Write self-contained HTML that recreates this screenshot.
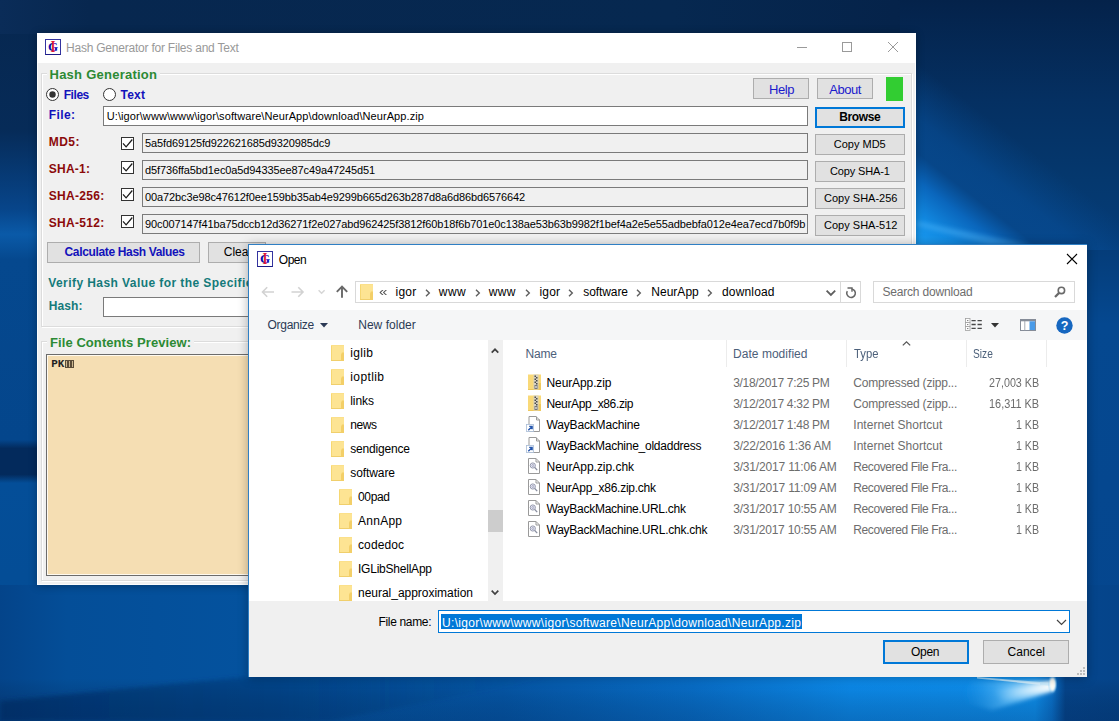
<!DOCTYPE html>
<html lang="en">
<head>
<meta charset="utf-8">
<title>Hash Generator for Files and Text</title>
<style>
html,body{margin:0;padding:0;}
body{width:1119px;height:721px;overflow:hidden;background:#04519b;font-family:"Liberation Sans",sans-serif;}
#root{position:relative;width:1119px;height:721px;overflow:hidden;}
#root div,#root span,#root svg{position:absolute;box-sizing:border-box;}
.t{white-space:pre;line-height:20px;}
.m{white-space:pre;line-height:20px;font-family:"Liberation Mono",monospace;}
.btn{background:#e1e1e1;border:1px solid #adadad;}
.tb{background:#f0f0f0;border:1px solid #7a7a7a;}
</style>
</head>
<body>
<div id="root">
<svg width="1119" height="721" viewBox="0 0 1119 721" style="left:0;top:0">
<defs>
<linearGradient id="gBase" x1="0" y1="0" x2="0" y2="721" gradientUnits="userSpaceOnUse">
<stop offset="0" stop-color="#07274f"/><stop offset="0.18" stop-color="#062b58"/><stop offset="0.29" stop-color="#07458a"/><stop offset="0.325" stop-color="#0a5aa8"/><stop offset="0.36" stop-color="#05488e"/><stop offset="0.61" stop-color="#04468c"/><stop offset="0.622" stop-color="#032a5c"/><stop offset="0.658" stop-color="#032a5c"/><stop offset="0.67" stop-color="#044e98"/><stop offset="0.93" stop-color="#044c94"/><stop offset="1" stop-color="#04468c"/>
</linearGradient>
<linearGradient id="gTop" x1="0" y1="0" x2="1119" y2="0" gradientUnits="userSpaceOnUse">
<stop offset="0" stop-color="#0a2c58"/><stop offset="0.08" stop-color="#07274f"/><stop offset="0.6" stop-color="#062850"/><stop offset="1" stop-color="#041e44"/>
</linearGradient>
<linearGradient id="gRight" x1="0" y1="0" x2="0" y2="721" gradientUnits="userSpaceOnUse">
<stop offset="0" stop-color="#04224a"/><stop offset="0.14" stop-color="#053062"/><stop offset="0.25" stop-color="#05386e"/><stop offset="0.34" stop-color="#053c78"/><stop offset="0.45" stop-color="#054890"/><stop offset="0.9" stop-color="#05468e"/><stop offset="1" stop-color="#043c80"/>
</linearGradient>
<linearGradient id="gBot" x1="0" y1="0" x2="1119" y2="0" gradientUnits="userSpaceOnUse">
<stop offset="0" stop-color="#04448a"/><stop offset="0.06" stop-color="#044e98"/><stop offset="0.22" stop-color="#04529e"/><stop offset="0.45" stop-color="#0558aa"/><stop offset="0.62" stop-color="#0870cc"/><stop offset="0.76" stop-color="#0c8cee"/><stop offset="0.925" stop-color="#0e92f2"/><stop offset="0.94" stop-color="#0a74d0"/><stop offset="0.952" stop-color="#05468e"/><stop offset="1" stop-color="#05448a"/>
</linearGradient>
<linearGradient id="gBotV" x1="0" y1="650" x2="0" y2="721" gradientUnits="userSpaceOnUse">
<stop offset="0" stop-color="#000" stop-opacity="0"/><stop offset="0.4" stop-color="#000" stop-opacity="0"/><stop offset="1" stop-color="#021a40" stop-opacity="0.25"/>
</linearGradient>
<linearGradient id="gConeR" x1="1030" y1="150" x2="941" y2="265" gradientUnits="userSpaceOnUse">
<stop offset="0" stop-color="#064a90" stop-opacity="0"/><stop offset="0.3" stop-color="#074e98" stop-opacity="0.6"/><stop offset="0.49" stop-color="#07488c" stop-opacity="0.9"/><stop offset="0.64" stop-color="#0a66bc" stop-opacity="1"/><stop offset="0.83" stop-color="#128ae2" stop-opacity="1"/><stop offset="1" stop-color="#1c9ef4" stop-opacity="1"/>
</linearGradient>
<radialGradient id="gGlow" cx="960" cy="705" r="420" gradientUnits="userSpaceOnUse" gradientTransform="translate(960 705) scale(1 0.5) translate(-960 -705)">
<stop offset="0" stop-color="#0c92f0" stop-opacity="1"/><stop offset="0.3" stop-color="#0a80de" stop-opacity="0.9"/><stop offset="0.7" stop-color="#0766c0" stop-opacity="0.5"/><stop offset="1" stop-color="#0556a8" stop-opacity="0"/>
</radialGradient>
<radialGradient id="gSpot2" cx="0.5" cy="0.5" r="0.5">
<stop offset="0" stop-color="#ffffff" stop-opacity="1"/><stop offset="0.45" stop-color="#d8f2ff" stop-opacity="0.85"/><stop offset="1" stop-color="#5cc0ff" stop-opacity="0"/>
</radialGradient>
<linearGradient id="gCone" x1="1050" y1="686" x2="965" y2="705" gradientUnits="userSpaceOnUse">
<stop offset="0" stop-color="#e8f8ff" stop-opacity="0.95"/><stop offset="0.5" stop-color="#7fd0ff" stop-opacity="0.6"/><stop offset="1" stop-color="#2aa0f0" stop-opacity="0"/>
</linearGradient>
<linearGradient id="gFloor" x1="0" y1="0" x2="560" y2="0" gradientUnits="userSpaceOnUse">
<stop offset="0" stop-color="#03306a" stop-opacity="0.7"/><stop offset="0.5" stop-color="#033a7c" stop-opacity="0.55"/><stop offset="1" stop-color="#044a92" stop-opacity="0"/>
</linearGradient>
<filter id="bl1" x="-50%" y="-50%" width="200%" height="200%"><feGaussianBlur stdDeviation="0.9"/></filter>
<linearGradient id="gCore" x1="1052" y1="686" x2="995" y2="697" gradientUnits="userSpaceOnUse"><stop offset="0" stop-color="#ffffff" stop-opacity="0.95"/><stop offset="0.6" stop-color="#e0f5ff" stop-opacity="0.45"/><stop offset="1" stop-color="#bfe8ff" stop-opacity="0"/></linearGradient>
<filter id="bl" x="-20%" y="-20%" width="140%" height="140%"><feGaussianBlur stdDeviation="2"/></filter>
</defs>
<rect width="1119" height="721" fill="url(#gBase)"/>
<rect x="0" y="0" width="1119" height="34" fill="url(#gTop)"/>
<rect x="900" y="0" width="219" height="585" fill="url(#gRight)"/>
<rect x="0" y="585" width="1119" height="136" fill="url(#gBot)"/>
<rect x="900" y="0" width="219" height="250" fill="url(#gConeR)"/>
<polygon points="917,221 1030,245 990,245 917,226" fill="#5cc0ff" opacity="0.35" filter="url(#bl)"/>
<polygon points="0,701 255,676 560,676 330,721 0,721" fill="url(#gFloor)" filter="url(#bl)"/>
<rect x="0" y="640" width="1119" height="81" fill="url(#gBotV)"/>
<polygon points="1053,681 1053,691 992,710 958,701 972,681" fill="url(#gCone)" filter="url(#bl)"/>
<polygon points="1052,683 1052,689 1002,701 992,690" fill="url(#gCore)" filter="url(#bl)"/>
<polygon points="1052,683 1052,686 977,678.500 977,677" fill="#c8ecff" opacity="0.75"/>
<polygon points="1040,683 1040,685 1000,680 1000,679.500" fill="#e8f8ff" opacity="0.5"/>
<ellipse cx="1052.500" cy="684" rx="5" ry="10" fill="url(#gSpot2)"/>
<ellipse cx="1052.500" cy="684.500" rx="2.400" ry="6.500" fill="#fffdf4" filter="url(#bl1)"/>
</svg>
<div style="left:37px;top:33px;width:879px;height:552px;background:#f0f0f0;box-shadow:0 1px 8px rgba(0,0,0,0.3);"></div>
<div style="left:37px;top:33px;width:879px;height:30px;background:#ffffff;"></div>
<div style="left:37px;top:63px;width:1px;height:522px;background:#fbfcfd;"></div>
<div style="left:915px;top:63px;width:1px;height:522px;background:#fbfcfd;"></div>
<div style="left:37px;top:584px;width:879px;height:1px;background:#fbfcfd;"></div>
<svg width="16" height="16" viewBox="0 0 16 16" style="left:45px;top:39px"><rect x="0.5" y="0.5" width="15" height="15" fill="#fff" stroke="#3434a0"/><path d="M0.500 15.500h15" stroke="#1c1c86"/><text x="8" y="12.200" text-anchor="middle" font-family="Liberation Serif,serif" font-weight="bold" font-size="13" fill="#0a0ab4">G</text><text x="8" y="13.400" text-anchor="middle" font-family="Liberation Serif,serif" font-weight="bold" font-size="17" fill="#e01838" textLength="5" lengthAdjust="spacingAndGlyphs">I</text></svg>
<span class="t" style="left:66.00px;top:38.00px;font-size:12px;color:#999999;letter-spacing:-0.221px;">Hash Generator for Files and Text</span>
<svg width="140" height="30" viewBox="0 0 140 30" style="left:777px;top:33px"><g stroke="#9a9a9a" stroke-width="1" fill="none"><path d="M20 14.5h10"/><rect x="65.5" y="9.5" width="9" height="9"/><path d="M111 9l10 10M121 9l-10 10"/></g></svg>
<div style="left:41px;top:73px;width:871px;height:254px;border:1px solid #dcdcdc;box-shadow:1px 1px 0 #fff, inset 1px 1px 0 #fff;"></div>
<div style="left:47px;top:66px;width:113px;height:16px;background:#f0f0f0;"></div>
<span class="t" style="left:49.50px;top:64.50px;font-size:13px;color:#2c8a34;font-weight:bold;letter-spacing:0.248px;">Hash Generation</span>
<svg width="13" height="13" viewBox="0 0 13 13" style="left:46px;top:88px"><circle cx="6.5" cy="6.5" r="6" fill="#fff" stroke="#333"/><circle cx="6.5" cy="6.5" r="3.2" fill="#333"/></svg>
<svg width="13" height="13" viewBox="0 0 13 13" style="left:103px;top:88px"><circle cx="6.5" cy="6.5" r="6" fill="#fff" stroke="#333"/></svg>
<span class="t" style="left:63.75px;top:84.75px;font-size:12px;color:#1212bb;font-weight:bold;letter-spacing:-0.457px;">Files</span>
<span class="t" style="left:120.50px;top:84.75px;font-size:12px;color:#1212bb;font-weight:bold;letter-spacing:0.240px;">Text</span>
<span class="t" style="left:48.75px;top:104.75px;font-size:12px;color:#1212bb;font-weight:bold;letter-spacing:0.398px;">File:</span>
<div style="left:103px;top:106px;width:705px;height:20px;background:#fff;border:1px solid #7a7a7a;"></div>
<span class="t" style="left:106.75px;top:106.00px;font-size:11px;color:#000;letter-spacing:0.083px;">U:\igor\www\www\igor\software\NeurApp\download\NeurApp.zip</span>
<span class="t" style="left:48.75px;top:131.75px;font-size:12px;color:#8b0a0a;font-weight:bold;letter-spacing:0.469px;">MD5:</span>
<svg width="13" height="13" viewBox="0 0 13 13" style="left:121px;top:137px;overflow:visible"><rect x="0.5" y="0.5" width="12" height="12" fill="#fff" stroke="#333"/><path d="M2 6.300L5.100 9.800L11.300 2.500" fill="none" stroke="#1a1a1a" stroke-width="1.25"/></svg>
<div class="tb" style="left:142px;top:133px;width:666px;height:20px;"></div>
<span class="t" style="left:145.00px;top:132.50px;font-size:11px;color:#000;letter-spacing:-0.121px;">5a5fd69125fd922621685d9320985dc9</span>
<div class="btn" style="left:815px;top:134px;width:90px;height:21px;"></div>
<span class="t" style="left:833.75px;top:133.50px;font-size:11px;color:#000;">Copy MD5</span>
<span class="t" style="left:48.75px;top:158.75px;font-size:12px;color:#8b0a0a;font-weight:bold;letter-spacing:0.247px;">SHA-1:</span>
<svg width="13" height="13" viewBox="0 0 13 13" style="left:121px;top:161px;overflow:visible"><rect x="0.5" y="0.5" width="12" height="12" fill="#fff" stroke="#333"/><path d="M2 6.300L5.100 9.800L11.300 2.500" fill="none" stroke="#1a1a1a" stroke-width="1.25"/></svg>
<div class="tb" style="left:142px;top:160px;width:666px;height:20px;"></div>
<span class="t" style="left:145.00px;top:159.50px;font-size:11px;color:#000;letter-spacing:-0.099px;">d5f736ffa5bd1ec0a5d94335ee87c49a47245d51</span>
<div class="btn" style="left:815px;top:161px;width:90px;height:21px;"></div>
<span class="t" style="left:830.00px;top:160.50px;font-size:11px;color:#000;letter-spacing:-0.128px;">Copy SHA-1</span>
<span class="t" style="left:48.75px;top:185.75px;font-size:12px;color:#8b0a0a;font-weight:bold;letter-spacing:0.306px;">SHA-256:</span>
<svg width="13" height="13" viewBox="0 0 13 13" style="left:121px;top:188px;overflow:visible"><rect x="0.5" y="0.5" width="12" height="12" fill="#fff" stroke="#333"/><path d="M2 6.300L5.100 9.800L11.300 2.500" fill="none" stroke="#1a1a1a" stroke-width="1.25"/></svg>
<div class="tb" style="left:142px;top:187px;width:666px;height:20px;"></div>
<span class="t" style="left:145.00px;top:186.50px;font-size:11px;color:#000;letter-spacing:-0.114px;">00a72bc3e98c47612f0ee159bb35ab4e9299b665d263b287d8a6d86bd6576642</span>
<div class="btn" style="left:815px;top:188px;width:90px;height:21px;"></div>
<span class="t" style="left:824.00px;top:187.50px;font-size:11px;color:#000;letter-spacing:0.009px;">Copy SHA-256</span>
<span class="t" style="left:48.75px;top:212.75px;font-size:12px;color:#8b0a0a;font-weight:bold;letter-spacing:0.306px;">SHA-512:</span>
<svg width="13" height="13" viewBox="0 0 13 13" style="left:121px;top:215px;overflow:visible"><rect x="0.5" y="0.5" width="12" height="12" fill="#fff" stroke="#333"/><path d="M2 6.300L5.100 9.800L11.300 2.500" fill="none" stroke="#1a1a1a" stroke-width="1.25"/></svg>
<div class="tb" style="left:142px;top:214px;width:666px;height:20px;"></div>
<div style="left:143px;top:215px;width:663px;height:18px;overflow:hidden;"><span class="t" style="left:2px;top:-1.00px;font-size:11px;letter-spacing:-0.11px;color:#000">90c007147f41ba75dccb12d36271f2e027abd962425f3812f60b18f6b701e0c138ae53b63b9982f1bef4a2e5e55adbebfa012e4ea7ecd7b0f9b</span></div>
<div class="btn" style="left:815px;top:215px;width:90px;height:21px;"></div>
<span class="t" style="left:824.00px;top:214.50px;font-size:11px;color:#000;letter-spacing:0.009px;">Copy SHA-512</span>
<div class="btn" style="left:753px;top:78px;width:56px;height:21px;"></div>
<span class="t" style="left:769.00px;top:79.70px;font-size:13px;color:#1a1acc;letter-spacing:-0.417px;">Help</span>
<div class="btn" style="left:817px;top:78px;width:56px;height:21px;"></div>
<span class="t" style="left:829.25px;top:79.70px;font-size:13px;color:#1a1acc;letter-spacing:-0.434px;">About</span>
<div style="left:886px;top:77px;width:17px;height:24px;background:#32cd32;"></div>
<div style="left:815px;top:107px;width:90px;height:21px;background:#e1e1e1;border:2px solid #0078d7;"></div>
<span class="t" style="left:839.25px;top:106.50px;font-size:12px;color:#000;font-weight:bold;letter-spacing:-0.369px;">Browse</span>
<div class="btn" style="left:47px;top:242px;width:153px;height:21px;"></div>
<span class="t" style="left:64.50px;top:242.00px;font-size:12px;color:#1212bb;font-weight:bold;letter-spacing:-0.343px;">Calculate Hash Values</span>
<div class="btn" style="left:208px;top:242px;width:58px;height:21px;"></div>
<span class="t" style="left:223.75px;top:242.00px;font-size:12px;color:#000;">Clear</span>
<span class="t" style="left:48.25px;top:273.00px;font-size:12px;color:#147a7a;font-weight:bold;letter-spacing:0.425px;">Verify Hash Value for the Specified File:</span>
<span class="t" style="left:48.75px;top:295.50px;font-size:12px;color:#147a7a;font-weight:bold;letter-spacing:0.102px;">Hash:</span>
<div style="left:103px;top:297px;width:600px;height:20px;background:#fff;border:1px solid #7a7a7a;"></div>
<div style="left:41px;top:341px;width:871px;height:240px;border:1px solid #dcdcdc;box-shadow:1px 1px 0 #fff, inset 1px 1px 0 #fff;"></div>
<div style="left:47px;top:334px;width:147px;height:16px;background:#f0f0f0;"></div>
<span class="t" style="left:50.00px;top:333.10px;font-size:13px;color:#2c8a34;font-weight:bold;letter-spacing:0.075px;">File Contents Preview:</span>
<div style="left:46px;top:354px;width:862px;height:222px;background:#f5deb3;border:1px solid #6c6c6c;box-shadow:inset 0 0 0 1px #fffaf0;"></div>
<span class="m" style="left:51.20px;top:353.70px;font-size:11px;color:#222;font-weight:bold;">PK</span>
<div style="left:64.5px;top:360px;width:3.5px;height:8px;border:1px solid #5a4c38;background:#cdb890;"></div>
<div style="left:67.5px;top:360px;width:3.5px;height:8px;border:1px solid #5a4c38;background:#cdb890;"></div>
<div style="left:70.5px;top:360px;width:3.5px;height:8px;border:1px solid #5a4c38;background:#cdb890;"></div>
<div style="left:248px;top:244px;width:839px;height:433px;background:#fff;border-top:1px solid #2f7fc4;border-left:1px solid #2f7fc4;box-shadow:0 1px 10px rgba(0,0,0,0.3);"></div>
<svg width="16" height="16" viewBox="0 0 16 16" style="left:257px;top:251px"><rect x="0.5" y="0.5" width="15" height="15" fill="#fff" stroke="#3434a0"/><path d="M0.500 15.500h15" stroke="#1c1c86"/><text x="8" y="12.200" text-anchor="middle" font-family="Liberation Serif,serif" font-weight="bold" font-size="13" fill="#0a0ab4">G</text><text x="8" y="13.400" text-anchor="middle" font-family="Liberation Serif,serif" font-weight="bold" font-size="17" fill="#e01838" textLength="5" lengthAdjust="spacingAndGlyphs">I</text></svg>
<span class="t" style="left:278.75px;top:249.75px;font-size:12px;color:#000;letter-spacing:-0.448px;">Open</span>
<svg width="14" height="14" viewBox="0 0 14 14" style="left:1065px;top:252px"><path d="M2 2l10 10M12 2l-10 10" stroke="#000" stroke-width="1.1" fill="none"/></svg>
<svg width="100" height="22" viewBox="0 0 100 22" style="left:256px;top:281px"><g fill="none"><path d="M18 11H6.800M11.200 6.300L6.500 11l4.700 4.700" stroke="#d2d2d2" stroke-width="1.600"/><path d="M35.500 11H46.700M42.300 6.300L47 11l-4.700 4.700" stroke="#d2d2d2" stroke-width="1.600"/><path d="M62.600 9.300l3 3l3-3" stroke="#d6d6d6" stroke-width="1.500"/><path d="M86 16.800V6.500M80.800 10.900L86 5.700l5.200 5.200" stroke="#686868" stroke-width="1.900"/></g></svg>
<div style="left:355px;top:281px;width:506px;height:22px;background:#fff;border:1px solid #d9d9d9;"></div>
<svg width="13" height="16" viewBox="0 0 13 16" style="left:360px;top:283.5px"><rect x="0" y="0" width="13" height="16" fill="#fde493"/><rect x="0" y="0" width="1" height="16" fill="#f6d772"/><rect x="0" y="15" width="13" height="1" fill="#f0cf6c"/><path d="M10 16V9.500L11 7.500h2V16z" fill="#f3cf68"/><rect x="0" y="0" width="13" height="1" fill="#fbe08a"/></svg>
<span class="t" style="left:378.80px;top:282.00px;font-size:13px;color:#555;transform:scaleX(1.1611);transform-origin:0 0;">«</span>
<span class="t" style="left:395.50px;top:282.25px;font-size:12px;color:#000;letter-spacing:0.245px;">igor</span>
<svg width="6" height="8" viewBox="0 0 6 8" style="left:424.5px;top:288.5px"><path d="M1 0.800L4.300 4L1 7.200" fill="none" stroke="#5e5e5e" stroke-width="1.4"/></svg>
<span class="t" style="left:438.75px;top:282.25px;font-size:12px;color:#000;letter-spacing:0.492px;">www</span>
<svg width="6" height="8" viewBox="0 0 6 8" style="left:474.5px;top:288.5px"><path d="M1 0.800L4.300 4L1 7.200" fill="none" stroke="#5e5e5e" stroke-width="1.4"/></svg>
<span class="t" style="left:488.75px;top:282.25px;font-size:12px;color:#000;letter-spacing:0.367px;">www</span>
<svg width="6" height="8" viewBox="0 0 6 8" style="left:524.5px;top:288.5px"><path d="M1 0.800L4.300 4L1 7.200" fill="none" stroke="#5e5e5e" stroke-width="1.4"/></svg>
<span class="t" style="left:539.50px;top:282.25px;font-size:12px;color:#000;letter-spacing:0.161px;">igor</span>
<svg width="6" height="8" viewBox="0 0 6 8" style="left:568.25px;top:288.5px"><path d="M1 0.800L4.300 4L1 7.200" fill="none" stroke="#5e5e5e" stroke-width="1.4"/></svg>
<span class="t" style="left:583.25px;top:282.25px;font-size:12px;color:#000;letter-spacing:-0.085px;">software</span>
<svg width="6" height="8" viewBox="0 0 6 8" style="left:636.25px;top:288.5px"><path d="M1 0.800L4.300 4L1 7.200" fill="none" stroke="#5e5e5e" stroke-width="1.4"/></svg>
<span class="t" style="left:651.25px;top:282.25px;font-size:12px;color:#000;letter-spacing:0.023px;">NeurApp</span>
<svg width="6" height="8" viewBox="0 0 6 8" style="left:707.0px;top:288.5px"><path d="M1 0.800L4.300 4L1 7.200" fill="none" stroke="#5e5e5e" stroke-width="1.4"/></svg>
<span class="t" style="left:722.00px;top:282.25px;font-size:12px;color:#000;letter-spacing:0.161px;">download</span>
<svg width="12" height="8" viewBox="0 0 12 8" style="left:825px;top:289px"><path d="M1.600 1.600L5.900 6l4.300-4.400" fill="none" stroke="#5e5e5e" stroke-width="1.800"/></svg>
<div style="left:840px;top:282px;width:1px;height:20px;background:#d9d9d9;"></div>
<svg width="14" height="14" viewBox="0 0 14 14" style="left:844px;top:285px"><path d="M7.600 3.900A4.300 4.300 0 1 1 3.300 6.050" fill="none" stroke="#666" stroke-width="1.500"/><path d="M3.500 3H8V6.800" fill="none" stroke="#666" stroke-width="1.400"/></svg>
<div style="left:873px;top:281px;width:202px;height:22px;background:#fff;border:1px solid #d9d9d9;"></div>
<span class="t" style="left:882.40px;top:282.25px;font-size:12px;color:#6d6d6d;letter-spacing:-0.173px;">Search download</span>
<svg width="14" height="14" viewBox="0 0 14 14" style="left:1053px;top:285px"><circle cx="8.400" cy="5.400" r="3.200" fill="none" stroke="#6a6a6a" stroke-width="1.600"/><path d="M6.100 7.900L2 12" stroke="#6a6a6a" stroke-width="2.200"/></svg>
<div style="left:249px;top:310px;width:838px;height:30px;background:#f5f6f7;"></div>
<span class="t" style="left:267.50px;top:314.75px;font-size:12px;color:#2b3a55;letter-spacing:-0.277px;">Organize</span>
<svg width="8" height="5" viewBox="0 0 8 5" style="left:319.5px;top:323px"><path d="M0 0h8L4 4.500z" fill="#2b3a55"/></svg>
<span class="t" style="left:358.25px;top:314.75px;font-size:12px;color:#2b3a55;letter-spacing:0.016px;">New folder</span>
<svg width="18" height="14" viewBox="0 0 18 14" style="left:964.500px;top:318px"><g fill="#fff" stroke="#a0a0a0" stroke-width="0.800"><rect x="0.500" y="0.500" width="4.500" height="4"/><rect x="0.500" y="4.500" width="4.500" height="4"/><rect x="0.500" y="8.500" width="4.500" height="4"/></g><g fill="#666"><rect x="2.200" y="2" width="1.100" height="1.100"/><rect x="2.200" y="6" width="1.100" height="1.100"/><rect x="2.200" y="10" width="1.100" height="1.100"/></g><g stroke="#484848" stroke-width="1.300"><path d="M6.500 2.600h4.200M12.500 2.600h4.300M6.500 6.500h4.200M12.500 6.500h4.300M6.500 10.400h4.200M12.500 10.400h4.300"/></g></svg>
<svg width="8" height="5" viewBox="0 0 8 5" style="left:990.500px;top:322.500px"><path d="M0 0h8L4 4.500z" fill="#333"/></svg>
<svg width="16" height="12" viewBox="0 0 16 12" style="left:1020px;top:319px"><rect x="0.500" y="0.500" width="15" height="11" fill="#fff" stroke="#858c98"/><rect x="1" y="1" width="14" height="1.300" fill="#858c98"/><rect x="9.500" y="2.300" width="5.500" height="8.700" fill="#4a9be8"/><path d="M4.800 2v9.500" stroke="#9aa0aa" stroke-width="0.900"/></svg>
<svg width="17" height="17" viewBox="0 0 17 17" style="left:1055.500px;top:316.500px"><circle cx="8.500" cy="8.500" r="8.200" fill="#1667c0"/><text x="8.500" y="13" text-anchor="middle" font-family="Liberation Sans,sans-serif" font-weight="bold" font-size="12.500" fill="#fff">?</text></svg>
<div style="left:249px;top:340px;width:255px;height:261px;overflow:hidden;background:#fff">
<svg width="13" height="16" viewBox="0 0 13 16" style="left:82px;top:5.0px"><rect x="0" y="0" width="13" height="16" fill="#fde493"/><rect x="0" y="0" width="1" height="16" fill="#f6d772"/><rect x="0" y="15" width="13" height="1" fill="#f0cf6c"/><path d="M10 16V9.500L11 7.500h2V16z" fill="#f3cf68"/><rect x="0" y="0" width="13" height="1" fill="#fbe08a"/></svg>
<span class="t" style="left:101.25px;top:3.25px;font-size:12px;letter-spacing:0.348px;color:#000">iglib</span>
<svg width="13" height="16" viewBox="0 0 13 16" style="left:82px;top:29.0px"><rect x="0" y="0" width="13" height="16" fill="#fde493"/><rect x="0" y="0" width="1" height="16" fill="#f6d772"/><rect x="0" y="15" width="13" height="1" fill="#f0cf6c"/><path d="M10 16V9.500L11 7.500h2V16z" fill="#f3cf68"/><rect x="0" y="0" width="13" height="1" fill="#fbe08a"/></svg>
<span class="t" style="left:101.25px;top:27.25px;font-size:12px;letter-spacing:0.398px;color:#000">ioptlib</span>
<svg width="13" height="16" viewBox="0 0 13 16" style="left:82px;top:53.0px"><rect x="0" y="0" width="13" height="16" fill="#fde493"/><rect x="0" y="0" width="1" height="16" fill="#f6d772"/><rect x="0" y="15" width="13" height="1" fill="#f0cf6c"/><path d="M10 16V9.500L11 7.500h2V16z" fill="#f3cf68"/><rect x="0" y="0" width="13" height="1" fill="#fbe08a"/></svg>
<span class="t" style="left:101.25px;top:51.25px;font-size:12px;letter-spacing:-0.066px;color:#000">links</span>
<svg width="13" height="16" viewBox="0 0 13 16" style="left:82px;top:77.0px"><rect x="0" y="0" width="13" height="16" fill="#fde493"/><rect x="0" y="0" width="1" height="16" fill="#f6d772"/><rect x="0" y="15" width="13" height="1" fill="#f0cf6c"/><path d="M10 16V9.500L11 7.500h2V16z" fill="#f3cf68"/><rect x="0" y="0" width="13" height="1" fill="#fbe08a"/></svg>
<span class="t" style="left:101.25px;top:75.25px;font-size:12px;letter-spacing:-0.422px;color:#000">news</span>
<svg width="13" height="16" viewBox="0 0 13 16" style="left:82px;top:101.0px"><rect x="0" y="0" width="13" height="16" fill="#fde493"/><rect x="0" y="0" width="1" height="16" fill="#f6d772"/><rect x="0" y="15" width="13" height="1" fill="#f0cf6c"/><path d="M10 16V9.500L11 7.500h2V16z" fill="#f3cf68"/><rect x="0" y="0" width="13" height="1" fill="#fbe08a"/></svg>
<span class="t" style="left:101.25px;top:99.25px;font-size:12px;letter-spacing:-0.181px;color:#000">sendigence</span>
<svg width="13" height="16" viewBox="0 0 13 16" style="left:82px;top:125.0px"><rect x="0" y="0" width="13" height="16" fill="#fde493"/><rect x="0" y="0" width="1" height="16" fill="#f6d772"/><rect x="0" y="15" width="13" height="1" fill="#f0cf6c"/><path d="M10 16V9.500L11 7.500h2V16z" fill="#f3cf68"/><rect x="0" y="0" width="13" height="1" fill="#fbe08a"/></svg>
<span class="t" style="left:101.25px;top:123.25px;font-size:12px;letter-spacing:-0.085px;color:#000">software</span>
<svg width="13" height="16" viewBox="0 0 13 16" style="left:90px;top:149.0px"><rect x="0" y="0" width="13" height="16" fill="#fde493"/><rect x="0" y="0" width="1" height="16" fill="#f6d772"/><rect x="0" y="15" width="13" height="1" fill="#f0cf6c"/><path d="M10 16V9.500L11 7.500h2V16z" fill="#f3cf68"/><rect x="0" y="0" width="13" height="1" fill="#fbe08a"/></svg>
<span class="t" style="left:109.00px;top:147.25px;font-size:12px;letter-spacing:-0.340px;color:#000">00pad</span>
<svg width="13" height="16" viewBox="0 0 13 16" style="left:90px;top:173.0px"><rect x="0" y="0" width="13" height="16" fill="#fde493"/><rect x="0" y="0" width="1" height="16" fill="#f6d772"/><rect x="0" y="15" width="13" height="1" fill="#f0cf6c"/><path d="M10 16V9.500L11 7.500h2V16z" fill="#f3cf68"/><rect x="0" y="0" width="13" height="1" fill="#fbe08a"/></svg>
<span class="t" style="left:109.00px;top:171.25px;font-size:12px;letter-spacing:0.263px;color:#000">AnnApp</span>
<svg width="13" height="16" viewBox="0 0 13 16" style="left:90px;top:197.0px"><rect x="0" y="0" width="13" height="16" fill="#fde493"/><rect x="0" y="0" width="1" height="16" fill="#f6d772"/><rect x="0" y="15" width="13" height="1" fill="#f0cf6c"/><path d="M10 16V9.500L11 7.500h2V16z" fill="#f3cf68"/><rect x="0" y="0" width="13" height="1" fill="#fbe08a"/></svg>
<span class="t" style="left:109.00px;top:195.25px;font-size:12px;letter-spacing:0.107px;color:#000">codedoc</span>
<svg width="13" height="16" viewBox="0 0 13 16" style="left:90px;top:221.0px"><rect x="0" y="0" width="13" height="16" fill="#fde493"/><rect x="0" y="0" width="1" height="16" fill="#f6d772"/><rect x="0" y="15" width="13" height="1" fill="#f0cf6c"/><path d="M10 16V9.500L11 7.500h2V16z" fill="#f3cf68"/><rect x="0" y="0" width="13" height="1" fill="#fbe08a"/></svg>
<span class="t" style="left:109.00px;top:219.25px;font-size:12px;letter-spacing:-0.225px;color:#000">IGLibShellApp</span>
<svg width="13" height="16" viewBox="0 0 13 16" style="left:90px;top:245.0px"><rect x="0" y="0" width="13" height="16" fill="#fde493"/><rect x="0" y="0" width="1" height="16" fill="#f6d772"/><rect x="0" y="15" width="13" height="1" fill="#f0cf6c"/><path d="M10 16V9.500L11 7.500h2V16z" fill="#f3cf68"/><rect x="0" y="0" width="13" height="1" fill="#fbe08a"/></svg>
<span class="t" style="left:109.00px;top:243.25px;font-size:12px;letter-spacing:-0.021px;color:#000">neural_approximation</span>
</div>
<div style="left:488px;top:340px;width:15px;height:261px;background:#f0f0f0;"></div>
<div style="left:488px;top:510px;width:15px;height:22px;background:#cdcdcd;"></div>
<svg width="10" height="7" viewBox="0 0 10 7" style="left:490px;top:346.500px"><path d="M1.700 5.600L5 2.300l3.300 3.300" fill="none" stroke="#404040" stroke-width="1.700"/></svg>
<svg width="10" height="7" viewBox="0 0 10 7" style="left:490px;top:589px"><path d="M1.700 1.700L5 5l3.300-3.300" fill="none" stroke="#404040" stroke-width="1.700"/></svg>
<span class="t" style="left:525.50px;top:343.50px;font-size:12px;color:#4c607a;letter-spacing:-0.172px;">Name</span>
<span class="t" style="left:733.00px;top:343.50px;font-size:12px;color:#4c607a;letter-spacing:0.039px;">Date modified</span>
<span class="t" style="left:853.80px;top:343.50px;font-size:12px;color:#4c607a;transform:scaleX(0.9379);transform-origin:0 0;">Type</span>
<span class="t" style="left:973.20px;top:343.50px;font-size:12px;color:#4c607a;transform:scaleX(0.8482);transform-origin:0 0;">Size</span>
<div style="left:726px;top:340px;width:1px;height:27px;background:#ececec;"></div>
<div style="left:846px;top:340px;width:1px;height:27px;background:#ececec;"></div>
<div style="left:966px;top:340px;width:1px;height:27px;background:#ececec;"></div>
<div style="left:1046px;top:340px;width:1px;height:27px;background:#ececec;"></div>
<svg width="9" height="5" viewBox="0 0 9 5" style="left:902px;top:340.700px"><path d="M0.800 4.400L4.500 0.900L8.200 4.400" fill="none" stroke="#585858" stroke-width="1.300"/></svg>
<svg width="14" height="16" viewBox="0 0 14 16" style="left:527px;top:373.5px"><rect x="1" y="0.500" width="13" height="15.500" fill="#f9d978"/><rect x="1" y="15" width="13" height="1" fill="#eec85c"/><path d="M11 16V10.500L12 9h2V16z" fill="#efc95e"/><rect x="6.500" y="0.500" width="5" height="15" fill="#d8d2c0"/><g fill="#4a4a4a"><rect x="7.500" y="1.500" width="1.500" height="1.500"/><rect x="9" y="3" width="1.500" height="1.500"/><rect x="7.500" y="4.500" width="1.500" height="1.500"/><rect x="9" y="6" width="1.500" height="1.500"/><rect x="7.500" y="7.500" width="1.500" height="1.500"/><rect x="9" y="9" width="1.500" height="1.500"/></g><rect x="7.500" y="11" width="3" height="4" fill="#777"/><rect x="8.300" y="12" width="1.400" height="2" fill="#ddd"/></svg>
<span class="t" style="left:546.50px;top:373.00px;font-size:12px;color:#000;letter-spacing:-0.103px;">NeurApp.zip</span>
<span class="t" style="left:733.20px;top:373.00px;font-size:12px;color:#6d6d6d;letter-spacing:-0.304px;">3/18/2017 7:25 PM</span>
<span class="t" style="left:853.30px;top:373.00px;font-size:12px;color:#6d6d6d;letter-spacing:-0.187px;">Compressed (zipp...</span>
<span class="t" style="left:989.10px;top:373.00px;font-size:12px;color:#6d6d6d;transform:scaleX(0.8944);transform-origin:0 0;">27,003 KB</span>
<svg width="14" height="16" viewBox="0 0 14 16" style="left:527px;top:394.5px"><rect x="1" y="0.500" width="13" height="15.500" fill="#f9d978"/><rect x="1" y="15" width="13" height="1" fill="#eec85c"/><path d="M11 16V10.500L12 9h2V16z" fill="#efc95e"/><rect x="6.500" y="0.500" width="5" height="15" fill="#d8d2c0"/><g fill="#4a4a4a"><rect x="7.500" y="1.500" width="1.500" height="1.500"/><rect x="9" y="3" width="1.500" height="1.500"/><rect x="7.500" y="4.500" width="1.500" height="1.500"/><rect x="9" y="6" width="1.500" height="1.500"/><rect x="7.500" y="7.500" width="1.500" height="1.500"/><rect x="9" y="9" width="1.500" height="1.500"/></g><rect x="7.500" y="11" width="3" height="4" fill="#777"/><rect x="8.300" y="12" width="1.400" height="2" fill="#ddd"/></svg>
<span class="t" style="left:546.50px;top:394.00px;font-size:12px;color:#000;letter-spacing:-0.360px;">NeurApp_x86.zip</span>
<span class="t" style="left:733.20px;top:394.00px;font-size:12px;color:#6d6d6d;letter-spacing:-0.304px;">3/12/2017 4:32 PM</span>
<span class="t" style="left:853.30px;top:394.00px;font-size:12px;color:#6d6d6d;letter-spacing:-0.187px;">Compressed (zipp...</span>
<span class="t" style="left:989.10px;top:394.00px;font-size:12px;color:#6d6d6d;transform:scaleX(0.9088);transform-origin:0 0;">16,311 KB</span>
<svg width="14" height="16" viewBox="0 0 14 16" style="left:527px;top:415.5px;overflow:visible"><path d="M2 0.500h7l3.500 3.500v11.500h-10.500z" fill="#fff" stroke="#9a9a9a"/><path d="M9.500 0.500v3.500h3.500" fill="none" stroke="#9a9a9a"/><rect x="-0.500" y="8.500" width="7" height="7" fill="#fff" stroke="#a9bcd6" stroke-width="0.800"/><path d="M1.300 14.200L4.600 10.900M2.200 10.400h2.900v2.900" fill="none" stroke="#2455ad" stroke-width="1.400"/></svg>
<span class="t" style="left:546.50px;top:415.00px;font-size:12px;color:#000;letter-spacing:-0.161px;">WayBackMachine</span>
<span class="t" style="left:733.20px;top:415.00px;font-size:12px;color:#6d6d6d;letter-spacing:-0.304px;">3/12/2017 1:48 PM</span>
<span class="t" style="left:853.30px;top:415.00px;font-size:12px;color:#6d6d6d;letter-spacing:0.021px;">Internet Shortcut</span>
<span class="t" style="left:1016.20px;top:415.00px;font-size:12px;color:#6d6d6d;transform:scaleX(0.8846);transform-origin:0 0;">1 KB</span>
<svg width="14" height="16" viewBox="0 0 14 16" style="left:527px;top:436.5px;overflow:visible"><path d="M2 0.500h7l3.500 3.500v11.500h-10.500z" fill="#fff" stroke="#9a9a9a"/><path d="M9.500 0.500v3.500h3.500" fill="none" stroke="#9a9a9a"/><rect x="-0.500" y="8.500" width="7" height="7" fill="#fff" stroke="#a9bcd6" stroke-width="0.800"/><path d="M1.300 14.200L4.600 10.900M2.200 10.400h2.900v2.900" fill="none" stroke="#2455ad" stroke-width="1.400"/></svg>
<span class="t" style="left:546.50px;top:436.00px;font-size:12px;color:#000;letter-spacing:-0.249px;">WayBackMachine_oldaddress</span>
<span class="t" style="left:733.20px;top:436.00px;font-size:12px;color:#6d6d6d;letter-spacing:-0.169px;">3/22/2016 1:36 AM</span>
<span class="t" style="left:853.30px;top:436.00px;font-size:12px;color:#6d6d6d;letter-spacing:0.021px;">Internet Shortcut</span>
<span class="t" style="left:1016.20px;top:436.00px;font-size:12px;color:#6d6d6d;transform:scaleX(0.8846);transform-origin:0 0;">1 KB</span>
<svg width="14" height="16" viewBox="0 0 14 16" style="left:527px;top:457.5px"><path d="M1.500 0.500h7.500l3.500 3.500v11.500h-11z" fill="#fff" stroke="#9a9a9a"/><path d="M9 0.500v3.500h3.500" fill="none" stroke="#9a9a9a"/><circle cx="5.800" cy="7.500" r="2.600" fill="#eef" stroke="#8a8fa0" stroke-width="0.900"/><circle cx="5.800" cy="7.500" r="1" fill="none" stroke="#8a8fa0" stroke-width="0.700"/><path d="M7.800 9.500l2.400 2.600" stroke="#8a8fa0" stroke-width="1.300"/></svg>
<span class="t" style="left:546.50px;top:457.00px;font-size:12px;color:#000;letter-spacing:-0.038px;">NeurApp.zip.chk</span>
<span class="t" style="left:733.20px;top:457.00px;font-size:12px;color:#6d6d6d;letter-spacing:-0.176px;">3/31/2017 11:06 AM</span>
<span class="t" style="left:853.30px;top:457.00px;font-size:12px;color:#6d6d6d;letter-spacing:-0.401px;">Recovered File Fra...</span>
<span class="t" style="left:1016.20px;top:457.00px;font-size:12px;color:#6d6d6d;transform:scaleX(0.8846);transform-origin:0 0;">1 KB</span>
<svg width="14" height="16" viewBox="0 0 14 16" style="left:527px;top:478.5px"><path d="M1.500 0.500h7.500l3.500 3.500v11.500h-11z" fill="#fff" stroke="#9a9a9a"/><path d="M9 0.500v3.500h3.500" fill="none" stroke="#9a9a9a"/><circle cx="5.800" cy="7.500" r="2.600" fill="#eef" stroke="#8a8fa0" stroke-width="0.900"/><circle cx="5.800" cy="7.500" r="1" fill="none" stroke="#8a8fa0" stroke-width="0.700"/><path d="M7.800 9.500l2.400 2.600" stroke="#8a8fa0" stroke-width="1.300"/></svg>
<span class="t" style="left:546.50px;top:478.00px;font-size:12px;color:#000;letter-spacing:-0.253px;">NeurApp_x86.zip.chk</span>
<span class="t" style="left:733.20px;top:478.00px;font-size:12px;color:#6d6d6d;letter-spacing:-0.176px;">3/31/2017 11:09 AM</span>
<span class="t" style="left:853.30px;top:478.00px;font-size:12px;color:#6d6d6d;letter-spacing:-0.401px;">Recovered File Fra...</span>
<span class="t" style="left:1016.20px;top:478.00px;font-size:12px;color:#6d6d6d;transform:scaleX(0.8846);transform-origin:0 0;">1 KB</span>
<svg width="14" height="16" viewBox="0 0 14 16" style="left:527px;top:499.5px"><path d="M1.500 0.500h7.500l3.500 3.500v11.500h-11z" fill="#fff" stroke="#9a9a9a"/><path d="M9 0.500v3.500h3.500" fill="none" stroke="#9a9a9a"/><circle cx="5.800" cy="7.500" r="2.600" fill="#eef" stroke="#8a8fa0" stroke-width="0.900"/><circle cx="5.800" cy="7.500" r="1" fill="none" stroke="#8a8fa0" stroke-width="0.700"/><path d="M7.800 9.500l2.400 2.600" stroke="#8a8fa0" stroke-width="1.300"/></svg>
<span class="t" style="left:546.50px;top:499.00px;font-size:12px;color:#000;letter-spacing:-0.259px;">WayBackMachine.URL.chk</span>
<span class="t" style="left:733.20px;top:499.00px;font-size:12px;color:#6d6d6d;letter-spacing:-0.228px;">3/31/2017 10:55 AM</span>
<span class="t" style="left:853.30px;top:499.00px;font-size:12px;color:#6d6d6d;letter-spacing:-0.401px;">Recovered File Fra...</span>
<span class="t" style="left:1016.20px;top:499.00px;font-size:12px;color:#6d6d6d;transform:scaleX(0.8846);transform-origin:0 0;">1 KB</span>
<svg width="14" height="16" viewBox="0 0 14 16" style="left:527px;top:520.5px"><path d="M1.500 0.500h7.500l3.500 3.500v11.500h-11z" fill="#fff" stroke="#9a9a9a"/><path d="M9 0.500v3.500h3.500" fill="none" stroke="#9a9a9a"/><circle cx="5.800" cy="7.500" r="2.600" fill="#eef" stroke="#8a8fa0" stroke-width="0.900"/><circle cx="5.800" cy="7.500" r="1" fill="none" stroke="#8a8fa0" stroke-width="0.700"/><path d="M7.800 9.500l2.400 2.600" stroke="#8a8fa0" stroke-width="1.300"/></svg>
<span class="t" style="left:546.50px;top:520.00px;font-size:12px;color:#000;letter-spacing:-0.237px;">WayBackMachine.URL.chk.chk</span>
<span class="t" style="left:733.20px;top:520.00px;font-size:12px;color:#6d6d6d;letter-spacing:-0.228px;">3/31/2017 10:55 AM</span>
<span class="t" style="left:853.30px;top:520.00px;font-size:12px;color:#6d6d6d;letter-spacing:-0.401px;">Recovered File Fra...</span>
<span class="t" style="left:1016.20px;top:520.00px;font-size:12px;color:#6d6d6d;transform:scaleX(0.8846);transform-origin:0 0;">1 KB</span>
<div style="left:249px;top:601px;width:838px;height:76px;background:#f0f0f0;"></div>
<span class="t" style="left:378.50px;top:612.00px;font-size:12px;color:#000;letter-spacing:-0.335px;">File name:</span>
<div style="left:438px;top:610px;width:632px;height:23px;background:#fff;border:1px solid #0078d7;"></div>
<div style="left:441px;top:614px;width:361px;height:15px;background:#0078d7;"></div>
<span class="t" style="left:442.00px;top:612.60px;font-size:12px;color:#fff;letter-spacing:0.319px;">U:\igor\www\www\igor\software\NeurApp\download\NeurApp.zip</span>
<svg width="11" height="7" viewBox="0 0 11 7" style="left:1055.500px;top:618.500px"><path d="M1 1l4.500 4.500L10 1" fill="none" stroke="#444" stroke-width="1.200"/></svg>
<div style="left:883px;top:640px;width:86px;height:24px;background:#e1e1e1;border:2px solid #0078d7;"></div>
<span class="t" style="left:911.00px;top:642.00px;font-size:12px;color:#000;letter-spacing:-0.281px;">Open</span>
<div class="btn" style="left:983px;top:640px;width:86px;height:24px;"></div>
<span class="t" style="left:1007.50px;top:642.00px;font-size:12px;color:#000;letter-spacing:0.028px;">Cancel</span>
<svg width="10" height="10" viewBox="0 0 10 10" style="left:1076px;top:666px"><g fill="#bdbdbd"><rect x="7" y="1" width="2" height="2"/><rect x="4" y="4" width="2" height="2"/><rect x="7" y="4" width="2" height="2"/><rect x="1" y="7" width="2" height="2"/><rect x="4" y="7" width="2" height="2"/><rect x="7" y="7" width="2" height="2"/></g></svg>
</div>
</body>
</html>
